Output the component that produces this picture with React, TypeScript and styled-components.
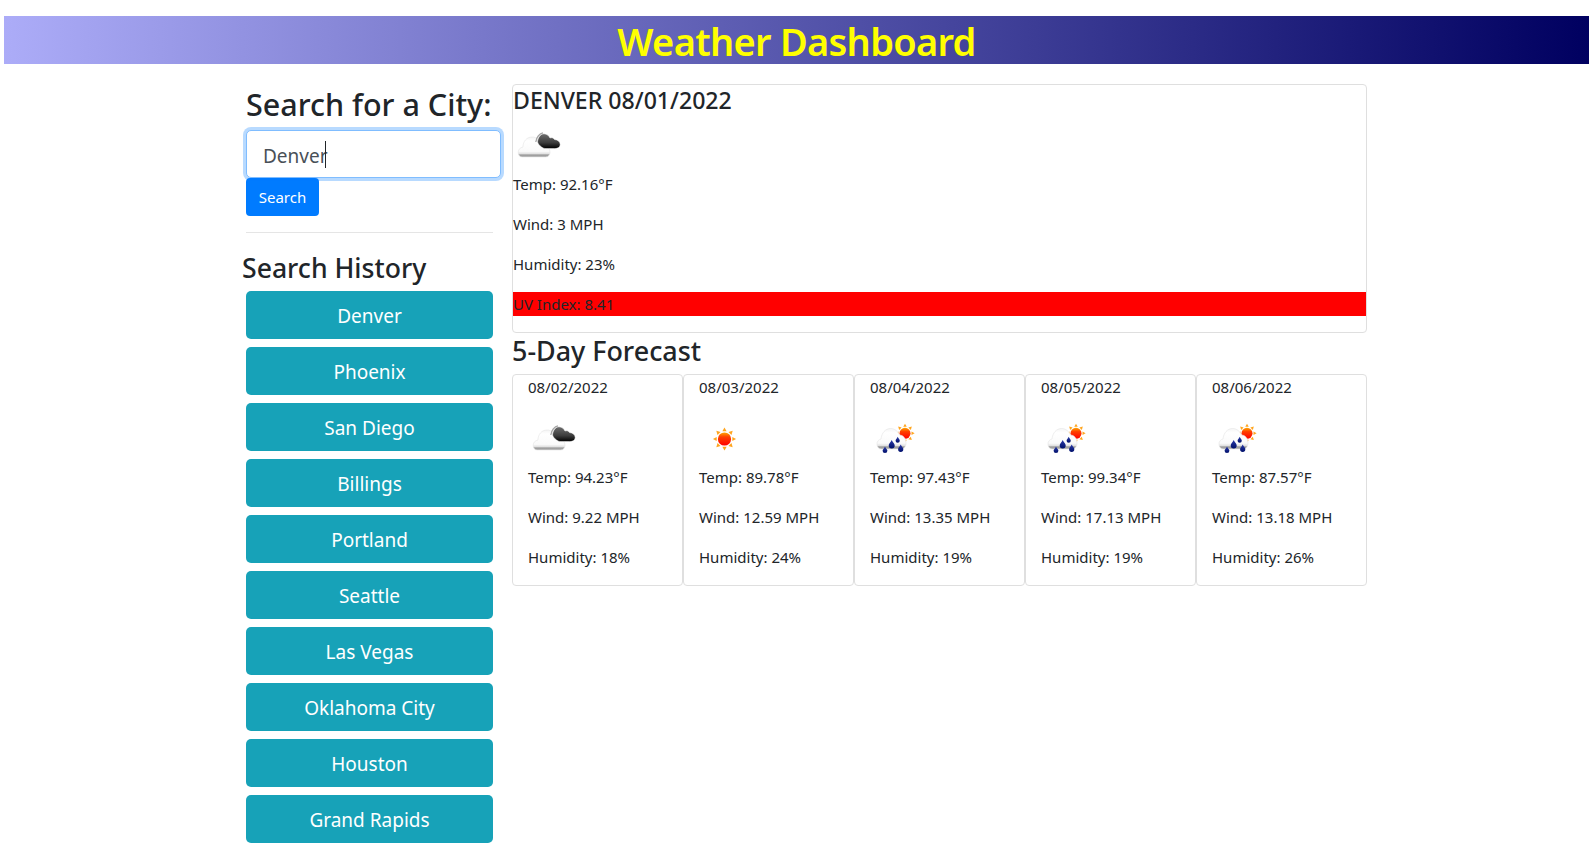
import React from "react";
import styled, { createGlobalStyle } from "styled-components";

const Global = createGlobalStyle`
  * { box-sizing: border-box; }
  html, body { margin: 0; padding: 0; background: #fff; }
  body {
    font-family: "Noto Sans", "Open Sans", sans-serif;
    font-size: 16px;
    line-height: 24px;
    color: #212529;
  }
`;

const Banner = styled.header`
  margin: 16px 1px 20px 4px;
  height: 48px;
  padding-top: 1px;
  background: linear-gradient(to right, #acacf8, #000060);
  color: #ffff00;
  text-align: center;
  font-size: 38px;
  font-weight: 600;
  line-height: 48px;
  letter-spacing: -0.7px;
`;

const Layout = styled.main`
  display: grid;
  grid-template-columns: 247px 855px;
  column-gap: 19px;
  margin-left: 246px;
  align-items: start;
`;

const Sidebar = styled.aside`
  display: flex;
  flex-direction: column;
  align-items: stretch;
`;

const SearchTitle = styled.h2`
  margin: 0 0 7px;
  padding-top: 1px;
  font-size: 30.5px;
  font-weight: 500;
  line-height: 38.4px;
  white-space: nowrap;
`;

const InputWrap = styled.div`
  position: relative;
  width: 255px;
  height: 48px;
`;

const CityInput = styled.input`
  display: block;
  width: 100%;
  height: 100%;
  padding: 3px 16px 0;
  border: 1px solid #80bdff;
  border-radius: 5px;
  outline: none;
  box-shadow: 0 0 0 3px rgba(0, 123, 255, 0.28);
  font: inherit;
  font-size: 19px;
  color: #495057;
  background: #fff;
  caret-color: transparent;
`;

const Caret = styled.span`
  position: absolute;
  left: 79px;
  top: 11px;
  width: 1px;
  height: 27px;
  background: #212529;
`;

const SearchButton = styled.button`
  align-self: flex-start;
  width: 73px;
  height: 38px;
  padding: 0;
  border: 0;
  border-radius: 4px;
  background: #007bff;
  color: #fff;
  font: inherit;
  font-size: 15px;
  cursor: pointer;
`;

const Rule = styled.hr`
  width: 100%;
  height: 1px;
  margin: 16px 0;
  border: 0;
  background: rgba(0, 0, 0, 0.1);
`;

const HistoryTitle = styled.h3`
  margin: 0 0 5px -4px;
  padding-top: 3px;
  font-size: 26.6px;
  font-weight: 500;
  line-height: 33.6px;
`;

const HistoryList = styled.div`
  display: flex;
  flex-direction: column;
  gap: 8px;
`;

const HistoryButton = styled.button`
  height: 48px;
  padding: 2px 0 0;
  border: 0;
  border-radius: 5px;
  background: #17a2b8;
  color: #fff;
  font: inherit;
  font-size: 19px;
  cursor: pointer;
`;

const Content = styled.section`
  display: flex;
  flex-direction: column;
`;

const Card = styled.article`
  border: 1px solid #dfdfdf;
  border-radius: 4px;
  background: #fff;
`;

const CurrentCard = styled(Card)`
  height: 249px;
`;

const CityTitle = styled.h4`
  margin: 0 0 7px;
  padding-top: 1px;
  font-size: 23.1px;
  font-weight: 500;
  line-height: 28.8px;
`;

const Line = styled.p<{ $alert?: boolean }>`
  margin: 0 0 16px;
  font-size: 15px;
  line-height: 24px;
  white-space: nowrap;
  background: ${(p) => (p.$alert ? "#ff0000" : "transparent")};
`;

const CurrentIcon = styled.div`
  height: 50px;
`;

const ForecastTitle = styled.h3`
  margin: 0 0 6.4px;
  padding-top: 1px;
  font-size: 26.9px;
  font-weight: 500;
  line-height: 33.6px;
`;

const ForecastRow = styled.div`
  display: grid;
  grid-template-columns: repeat(5, 171px);
`;

const DayCard = styled(Card)`
  height: 212px;
  padding: 0 15px;
`;

const DayIcon = styled.div`
  height: 50px;
`;

const IconSvg = styled.svg`
  display: block;
  width: 50px;
  height: 50px;
  filter: blur(0.3px);
`;

type Kind = "clouds" | "sun" | "rain";

const Defs = () => (
  <defs>
    <linearGradient id="whiteCloud" x1="0" y1="0" x2="0" y2="1">
      <stop offset="0" stopColor="#f4f4f4" />
      <stop offset="0.2" stopColor="#ffffff" />
      <stop offset="0.72" stopColor="#fafafa" />
      <stop offset="0.85" stopColor="#dedede" />
      <stop offset="0.89" stopColor="#9c9c9c" />
      <stop offset="1" stopColor="#a8a8a8" />
    </linearGradient>
    <linearGradient id="darkCloud" x1="0" y1="0" x2="0" y2="1">
      <stop offset="0" stopColor="#6e6e6e" />
      <stop offset="0.6" stopColor="#3c3c3c" />
      <stop offset="1" stopColor="#000000" />
    </linearGradient>
    <linearGradient id="sunCore" x1="0" y1="0" x2="0" y2="1">
      <stop offset="0" stopColor="#ffa800" />
      <stop offset="0.35" stopColor="#ff4000" />
      <stop offset="1" stopColor="#ff0000" />
    </linearGradient>
    <linearGradient id="drop" x1="0" y1="0" x2="0" y2="1">
      <stop offset="0" stopColor="#2a3aa8" />
      <stop offset="1" stopColor="#00106a" />
    </linearGradient>
  </defs>
);

const Sun = ({ cx, cy, r }: { cx: number; cy: number; r: number }) => {
  const rays = [0, 45, 90, 135, 180, 225, 270, 315];
  return (
    <g>
      {rays.map((a) => (
        <polygon
          key={a}
          transform={`rotate(${a} ${cx} ${cy})`}
          fill="#ffa51e"
          points={`${cx - r * 0.32},${cy - r * 1.18} ${cx + r * 0.32},${cy - r * 1.18} ${cx},${cy - r * 1.75}`}
        />
      ))}
      <circle cx={cx} cy={cy} r={r} fill="url(#sunCore)" />
    </g>
  );
};

const WhiteCloud = ({ d }: { d: string }) => (
  <path d={d} fill="url(#whiteCloud)" stroke="#e4e4e4" strokeWidth="0.6" />
);

const Drop = ({ x, y, s }: { x: number; y: number; s: number }) => (
  <path
    d={`M${x} ${y - s * 1.5} C${x + s * 0.4} ${y - s * 0.6} ${x + s} ${y - s * 0.3} ${x + s} ${y + s * 0.3} A${s} ${s} 0 0 1 ${x - s} ${y + s * 0.3} C${x - s} ${y - s * 0.3} ${x - s * 0.4} ${y - s * 0.6} ${x} ${y - s * 1.5}Z`}
    fill="url(#drop)"
  />
);

const WeatherIcon = ({ kind }: { kind: Kind }) => (
  <IconSvg viewBox="0 0 50 50" aria-hidden="true">
    <Defs />
    {kind === "clouds" && (
      <g>
        <WhiteCloud d="M9.5 35 C6.5 35 5.2 32.8 5.2 30.2 C5.2 27.5 7.2 25.5 9.8 25.2 C10.2 19.5 13.5 15 19 15 C23.5 15 26.5 18 27.5 22.3 C29 21.3 31.5 22 32.2 24.4 C35 24.6 37 27 37 30.2 C37 32.8 35.5 35 32.5 35Z" />
        <path
          d="M22.8 20 C23.3 15.5 26.5 11.5 30 11"
          fill="none"
          stroke="#a5a5a5"
          strokeWidth="1.3"
        />
        <path
          d="M24.5 20 C25 15.5 27.5 11.8 31 11.8 C34 11.8 36 14 37 16 C38.5 15.3 40.5 15.8 41.5 17.5 C44.5 17.8 47.2 19.5 47.2 22.6 C47.2 25.6 44 26.6 41.5 26.6 L33 26.6 C30 26.6 26 24 24.5 20Z"
          fill="url(#darkCloud)"
          stroke="#ffffff"
          strokeWidth="0.5"
        />
      </g>
    )}
    {kind === "sun" && <Sun cx={25.5} cy={24} r={6.6} />}
    {kind === "rain" && (
      <g>
        <Sun cx={35} cy={18.3} r={5.5} />
        <WhiteCloud d="M11 34 C8.5 34 7 31.8 7 29 C7 26.5 8.5 24.6 11 24 C11.5 18 15.5 13.5 20.5 13.5 C25 13.5 28 16.5 29.5 20 C33 20 36 23.5 36 27.5 C36 31 34.5 34 31.5 34Z" />
        <Drop x={15} y={35} s={2.4} />
        <Drop x={21.7} y={29.5} s={3} />
        <Drop x={27.7} y={25} s={2.1} />
        <Drop x={30.7} y={33.5} s={2.6} />
      </g>
    )}
  </IconSvg>
);

const history = [
  "Denver",
  "Phoenix",
  "San Diego",
  "Billings",
  "Portland",
  "Seattle",
  "Las Vegas",
  "Oklahoma City",
  "Houston",
  "Grand Rapids",
];

const forecast: { date: string; kind: Kind; temp: string; wind: string; humidity: string }[] = [
  { date: "08/02/2022", kind: "clouds", temp: "94.23", wind: "9.22", humidity: "18" },
  { date: "08/03/2022", kind: "sun", temp: "89.78", wind: "12.59", humidity: "24" },
  { date: "08/04/2022", kind: "rain", temp: "97.43", wind: "13.35", humidity: "19" },
  { date: "08/05/2022", kind: "rain", temp: "99.34", wind: "17.13", humidity: "19" },
  { date: "08/06/2022", kind: "rain", temp: "87.57", wind: "13.18", humidity: "26" },
];

export default function App() {
  return (
    <>
      <Global />
      <Banner>Weather Dashboard</Banner>
      <Layout>
        <Sidebar>
          <SearchTitle>Search for a City:</SearchTitle>
          <InputWrap>
            <CityInput defaultValue="Denver" aria-label="City" />
            <Caret />
          </InputWrap>
          <SearchButton>Search</SearchButton>
          <Rule />
          <HistoryTitle>Search History</HistoryTitle>
          <HistoryList>
            {history.map((city) => (
              <HistoryButton key={city}>{city}</HistoryButton>
            ))}
          </HistoryList>
        </Sidebar>
        <Content>
          <CurrentCard>
            <CityTitle>DENVER 08/01/2022</CityTitle>
            <CurrentIcon>
              <WeatherIcon kind="clouds" />
            </CurrentIcon>
            <Line>Temp: 92.16°F</Line>
            <Line>Wind: 3 MPH</Line>
            <Line>Humidity: 23%</Line>
            <Line $alert>UV Index: 8.41</Line>
          </CurrentCard>
          <ForecastTitle>5-Day Forecast</ForecastTitle>
          <ForecastRow>
            {forecast.map((d) => (
              <DayCard key={d.date}>
                <Line>{d.date}</Line>
                <DayIcon>
                  <WeatherIcon kind={d.kind} />
                </DayIcon>
                <Line>Temp: {d.temp}°F</Line>
                <Line>Wind: {d.wind} MPH</Line>
                <Line>Humidity: {d.humidity}%</Line>
              </DayCard>
            ))}
          </ForecastRow>
        </Content>
      </Layout>
    </>
  );
}
